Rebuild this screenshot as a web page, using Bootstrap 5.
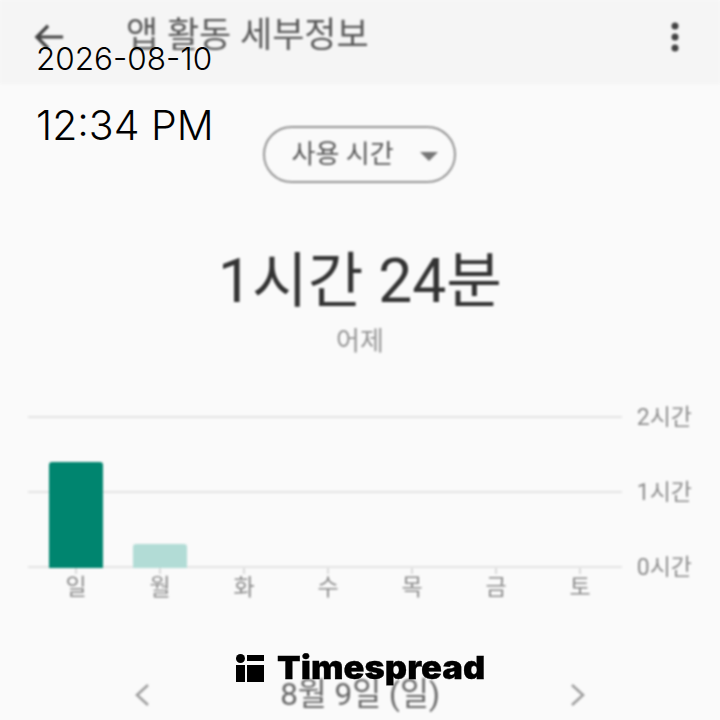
<!DOCTYPE html>
<html lang="ko">
<head>
    <meta charset="UTF-8">
    <meta name="viewport" content="width=device-width, initial-scale=1.0">
    <title>앱 활동 세부정보</title>
    <link href="https://cdn.jsdelivr.net/npm/bootstrap@5.3.0/dist/css/bootstrap.min.css" rel="stylesheet">
    <style>
        html, body {
            width: 720px;
            height: 720px;
            overflow: hidden;
        }
        body {
            background-color: #fafafa;
            font-family: Roboto, "Noto Sans CJK KR", sans-serif;
            color: #757575;
            position: relative;
        }
        .soft-layer {
            filter: blur(0.8px);
            height: 720px;
        }
        .app-bar {
            height: 84px;
            background-color: #f5f5f5;
            padding: 0 41px 10px 34px;
        }
        .app-title {
            font-size: 35px;
            line-height: 1;
            color: #5a5a5a;
            margin: 0 0 0 62px;
            font-weight: 400;
            transform: translateY(-2px);
        }
        .metric-pick {
            width: 193px;
            height: 57px;
            margin-top: 42px;
            margin-right: 2px;
            border: 2px solid #949494;
            border-radius: 29px;
            font-size: 26px;
            color: #555;
            padding-left: 27px;
        }
        .pick-caret {
            width: 0;
            height: 0;
            border-left: 9px solid transparent;
            border-right: 9px solid transparent;
            border-top: 9px solid #757575;
            margin-left: 26px;
            margin-top: 3px;
        }
        .big-time {
            font-size: 60.5px;
            line-height: 60px;
            color: #333;
            margin-top: 69px;
        }
        .when-label {
            font-size: 26px;
            line-height: 26px;
            color: #949494;
            margin-top: 16px;
        }
        .chart-box {
            margin: 62px 0 0 28px;
            width: 664px;
        }
        .grid-row {
            height: 75px;
        }
        .grid-base {
            height: 2px;
        }
        .grid-rule {
            width: 594px;
            height: 2px;
            background-color: #e4e4e4;
        }
        .grid-tag {
            font-size: 23px;
            line-height: 1;
            color: #8c8c8c;
            margin-left: 15px;
            margin-top: -10px;
        }
        .bar-item {
            position: absolute;
            bottom: 0;
            width: 54px;
            border-radius: 3px 3px 0 0;
        }
        .bar-plot {
            position: relative;
        }
        .day-row {
            width: 594px;
            padding-left: 6px;
        }
        .day-item {
            width: 84.3px;
            text-align: center;
            font-size: 23px;
            line-height: 1;
            color: #8c8c8c;
        }
        .day-tick {
            width: 2px;
            height: 6px;
            background-color: #dcdcdc;
            margin: 0 auto 2px;
        }
        .date-nav {
            position: absolute;
            left: 0;
            right: 0;
            top: 679px;
            padding: 0 134px;
            font-size: 31.5px;
            line-height: 1;
            color: #666;
        }
        .stamp-overlay {
            position: absolute;
            left: 36px;
            top: 40px;
            font-family: Inter, sans-serif;
            font-weight: 350;
            color: #000;
        }
        .stamp-date {
            font-size: 31.5px;
            line-height: 38px;
        }
        .stamp-time {
            font-size: 41px;
            line-height: 48px;
            margin-top: 23px;
        }
        .brand-mark {
            position: absolute;
            left: 236px;
            top: 654px;
            color: #000;
        }
        .brand-name {
            font-family: Inter, sans-serif;
            font-weight: 900;
            font-size: 32px;
            line-height: 28px;
            margin-left: 13px;
            transform: scaleX(1.08);
            transform-origin: left center;
            -webkit-text-stroke: 0.3px #000;
        }
    </style>
</head>
<body>
    <div class="soft-layer">
        <div class="app-bar d-flex align-items-center">
            <svg width="30" height="30" viewBox="0 0 32 32" fill="none" stroke="#424242" stroke-width="3.4">
                <path d="M31 16H3M15 4L3 16l12 12"/>
            </svg>
            <h1 class="app-title">앱 활동 세부정보</h1>
            <svg class="ms-auto" width="8" height="30" viewBox="0 0 8 30" fill="#424242">
                <circle cx="4" cy="4" r="3.5"/>
                <circle cx="4" cy="15" r="3.5"/>
                <circle cx="4" cy="26" r="3.5"/>
            </svg>
        </div>

        <div class="d-flex justify-content-center">
            <div class="metric-pick d-flex align-items-center">
                <span>사용 시간</span>
                <span class="pick-caret"></span>
            </div>
        </div>

        <div class="big-time text-center">1시간 24분</div>
        <div class="when-label text-center">어제</div>

        <div class="chart-box">
            <div class="bar-plot">
                <div class="grid-row d-flex"><div class="grid-rule"></div><span class="grid-tag">2시간</span></div>
                <div class="grid-row d-flex"><div class="grid-rule"></div><span class="grid-tag">1시간</span></div>
                <div class="grid-base d-flex"><div class="grid-rule"></div><span class="grid-tag">0시간</span></div>
                <div class="bar-item" style="left: 21px; height: 106px; background-color: #00856f;"></div>
                <div class="bar-item" style="left: 105px; height: 24px; background-color: #b2dcd6;"></div>
            </div>
            <div class="day-row d-flex">
                <div class="day-item"><div class="day-tick"></div>일</div>
                <div class="day-item"><div class="day-tick"></div>월</div>
                <div class="day-item"><div class="day-tick"></div>화</div>
                <div class="day-item"><div class="day-tick"></div>수</div>
                <div class="day-item"><div class="day-tick"></div>목</div>
                <div class="day-item"><div class="day-tick"></div>금</div>
                <div class="day-item"><div class="day-tick"></div>토</div>
            </div>
        </div>

        <div class="date-nav d-flex justify-content-between align-items-center">
            <svg width="16" height="24" viewBox="0 0 16 24" fill="none" stroke="#9e9e9e" stroke-width="2.6">
                <path d="M14 2L3 12l11 10"/>
            </svg>
            <span>8월 9일 (일)</span>
            <svg width="16" height="24" viewBox="0 0 16 24" fill="none" stroke="#9e9e9e" stroke-width="2.6">
                <path d="M2 2l11 10L2 22"/>
            </svg>
        </div>
    </div>

    <div class="stamp-overlay">
        <div class="stamp-date">2026-08-10</div>
        <div class="stamp-time">12:34 PM</div>
    </div>

    <div class="brand-mark d-flex align-items-center">
        <svg width="28" height="28" viewBox="0 0 28 28" fill="#000">
            <circle cx="4.5" cy="4.5" r="4.5"/>
            <rect x="0" y="11" width="9" height="17"/>
            <rect x="11" y="1" width="17" height="6"/>
            <rect x="11" y="11" width="17" height="17"/>
        </svg>
        <span class="brand-name">Timespread</span>
    </div>

    <script src="https://cdn.jsdelivr.net/npm/bootstrap@5.3.0/dist/js/bootstrap.bundle.min.js"></script>
</body>
</html>
